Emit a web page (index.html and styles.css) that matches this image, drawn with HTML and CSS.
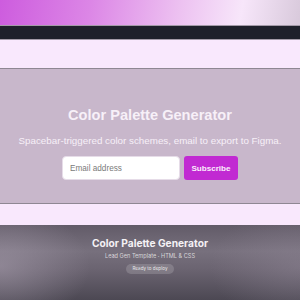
FILE: index.html
```html
<!DOCTYPE html>
<html lang="en">
<head>
    <meta charset="UTF-8">
    <meta name="viewport" content="width=device-width, initial-scale=1.0">
    <title>Color Palette Generator</title>
    <link rel="stylesheet" href="styles.css">
</head>
<body>
    <div class="card">
        <!-- Page preview -->
        <div class="hero-top"></div>
        <div class="nav"></div>
        <div class="band"></div>

        <section class="signup">
            <h1>Color Palette Generator</h1>
            <p>Spacebar-triggered color schemes, email to export to Figma.</p>
            <form class="signup-form" onsubmit="return false;">
                <input type="email" placeholder="Email address">
                <button type="submit">Subscribe</button>
            </form>
        </section>

        <div class="band band-low"></div>

        <!-- Card caption -->
        <div class="caption">
            <h2>Color Palette Generator</h2>
            <span class="meta">Lead Gen Template · HTML &amp; CSS</span>
            <span class="badge">Ready to deploy</span>
        </div>
    </div>
</body>
</html>
```

FILE: styles.css
```css
/* General */
body {
    margin: 0;
    padding: 0;
    font-family: "Liberation Sans", Arial, sans-serif;
    background: #1f202b;
}

.card {
    width: 300px;
    height: 300px;
    overflow: hidden;
    display: flex;
    flex-direction: column;
}

/* Preview strips */
.hero-top {
    height: 25px;
    flex: none;
    background: linear-gradient(100deg, #cd5cde 0%, #dc86e6 30%, #edc2f1 60%, #f7e6fa 80%, #d8c9db 100%);
    border-bottom: 1px solid #a49aa8;
}

.nav {
    height: 13px;
    flex: none;
    background: #1f202b;
    border-bottom: 1px solid #a49aa8;
}

.band {
    height: 28px;
    flex: none;
    background: #f9e8fd;
    border-bottom: 1px solid #8f8793;
}

.band-low {
    height: 21px;
    border-bottom: none;
}

/* Signup block */
.signup {
    height: 135px;
    flex: none;
    box-sizing: border-box;
    padding-top: 38px;
    background: #c8b7cb;
    border-bottom: 1px solid #8f8793;
    display: flex;
    flex-direction: column;
    align-items: center;
}

.signup h1 {
    margin: 0;
    font-size: 14.6px;
    line-height: 17px;
    font-weight: bold;
    color: #f7f0f8;
}

.signup p {
    margin: 11px 0 0;
    font-size: 9.8px;
    line-height: 11px;
    color: #f7f0f8;
    white-space: nowrap;
}

.signup-form {
    margin-top: 10px;
    display: flex;
    gap: 4px;
}

.signup-form input {
    width: 118px;
    height: 24px;
    box-sizing: border-box;
    padding: 0 7px;
    border: 1px solid #e6dce8;
    border-radius: 4px;
    background: #fff;
    font-family: "Liberation Sans", Arial, sans-serif;
    font-size: 8.2px;
}

.signup-form input::placeholder {
    color: #7a7a7a;
}

.signup-form button {
    width: 54px;
    height: 24px;
    border: none;
    border-radius: 3px;
    background: #c12ad2;
    color: #fbeefc;
    font-family: "Liberation Sans", Arial, sans-serif;
    font-size: 8.1px;
    font-weight: bold;
    padding: 0;
    cursor: pointer;
}

/* Caption overlay */
.caption {
    flex: 1;
    padding-top: 12px;
    font-family: Inter, "Noto Sans", sans-serif;
    background:
        radial-gradient(ellipse 90px 60px at 0% 55%, rgba(170, 160, 176, 0.55), transparent),
        radial-gradient(ellipse 90px 60px at 100% 55%, rgba(150, 140, 156, 0.4), transparent),
        linear-gradient(#625b68, #77707d 35%, #6a6370 60%, #4c4853);
    display: flex;
    flex-direction: column;
    align-items: center;
}

.caption h2 {
    margin: 0;
    font-size: 10.2px;
    line-height: 13px;
    font-weight: 700;
    color: #f4f1f5;
}

.meta {
    margin-top: 3px;
    font-size: 5.6px;
    line-height: 7px;
    color: rgba(255, 255, 255, 0.72);
}

.badge {
    margin-top: 4px;
    padding: 0 6px;
    height: 10px;
    line-height: 10px;
    font-size: 4.6px;
    color: rgba(255, 255, 255, 0.85);
    background: rgba(255, 255, 255, 0.16);
    border-radius: 6px;
}
```
